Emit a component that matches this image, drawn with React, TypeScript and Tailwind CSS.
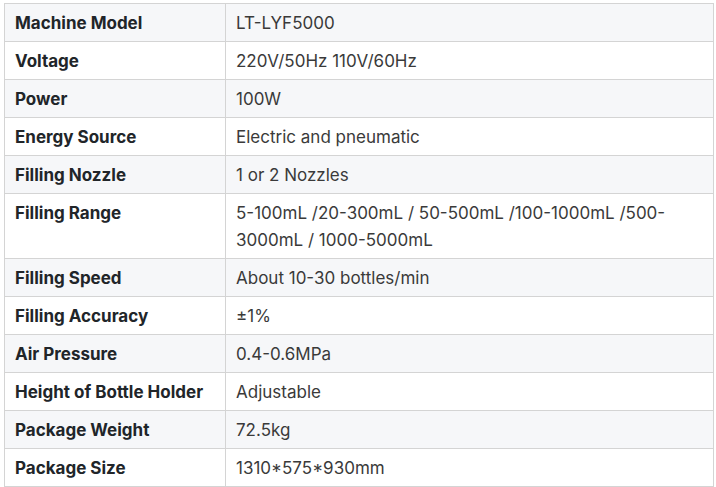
const specs: [string, string][] = [
  ["Machine Model", "LT-LYF5000"],
  ["Voltage", "220V/50Hz 110V/60Hz"],
  ["Power", "100W"],
  ["Energy Source", "Electric and pneumatic"],
  ["Filling Nozzle", "1 or 2 Nozzles"],
  ["Filling Range", "5-100mL /20-300mL / 50-500mL /100-1000mL /500-3000mL / 1000-5000mL"],
  ["Filling Speed", "About 10-30 bottles/min"],
  ["Filling Accuracy", "±1%"],
  ["Air Pressure", "0.4-0.6MPa"],
  ["Height of Bottle Holder", "Adjustable"],
  ["Package Weight", "72.5kg"],
  ["Package Size", "1310*575*930mm"],
];

export default function App() {
  return (
    <div className="min-h-screen bg-white pl-[4px] pt-[3px] font-['Inter',sans-serif]">
      <table className="w-[710px] border-collapse border border-[#d4d4d4] text-[17px] leading-[27px]">
        <tbody>
          {specs.map(([label, value], i) => (
            <tr key={label} className={i % 2 === 0 ? "bg-[#f6f7f9]" : "bg-white"}>
              <td className="w-[221px] border border-[#d4d4d4] px-[10px] pt-[6px] pb-[4px] align-top font-bold text-[#212529]">
                {label}
              </td>
              <td className="border border-[#d4d4d4] px-[10px] pt-[6px] pb-[4px] align-top text-[#3a3a3a]">
                {value}
              </td>
            </tr>
          ))}
        </tbody>
      </table>
    </div>
  );
}
